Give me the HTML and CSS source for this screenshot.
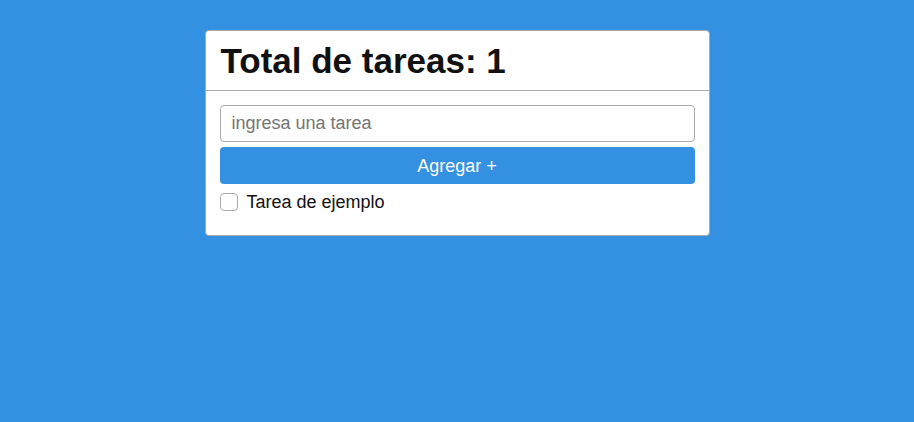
FILE: index.html
```html
<!DOCTYPE html>
<html lang="es">
<head>
<meta charset="utf-8">
<meta name="viewport" content="width=device-width, initial-scale=1">
<title>Tareas</title>
<link rel="stylesheet" href="styles.css">
</head>
<body>
<main class="card">
  <header class="card-header">
    <h1 class="card-title">Total de tareas: 1</h1>
  </header>
  <section class="card-body">
    <form class="task-form">
      <input class="task-input" type="text" placeholder="ingresa una tarea" aria-label="Tarea">
      <button class="task-button" type="button">Agregar +</button>
    </form>
    <ul class="task-list">
      <li>
        <label class="task"><input class="task-check" type="checkbox"> Tarea de ejemplo</label>
      </li>
    </ul>
  </section>
</main>
</body>
</html>
```
FILE: styles.css
```css
*,
*::before,
*::after {
  box-sizing: border-box;
}

body {
  margin: 0;
  padding: 30px 16px;
  background: #3490e0;
  color: #111;
  font: 18px/24px "Liberation Sans", Arial, sans-serif;
}

.card {
  max-width: 505px;
  margin: 0 auto;
  background: #fff;
  border: 1px solid #aaa;
  border-radius: 4px;
}

.card-header {
  padding: 8px 15px;
  border-bottom: 1px solid #aaa;
}

.card-title {
  margin: 0;
  font-size: 35px;
  line-height: 43px;
}

.card-body {
  padding: 14px;
}

.task-form {
  display: grid;
  gap: 5px;
}

.task-input,
.task-button {
  width: 100%;
  height: 37px;
  margin: 0;
  padding: 0 11px;
  border-radius: 4px;
  font: inherit;
}

.task-input {
  border: 1px solid #aaa;
  background: #fff;
  color: inherit;
}

.task-input::placeholder {
  color: #757575;
}

.task-button {
  border: 0;
  background: #3490e0;
  color: #fff;
}

.task-list {
  margin: 6px 0 7px;
  padding: 0;
  list-style: none;
}

.task {
  display: flex;
  align-items: center;
  gap: 9px;
}

.task-check {
  appearance: none;
  width: 18px;
  height: 18px;
  margin: 0;
  border: 1px solid #aaa;
  border-radius: 4px;
  background: #fff;
}

.task-check:checked {
  background: #3490e0;
}
```
